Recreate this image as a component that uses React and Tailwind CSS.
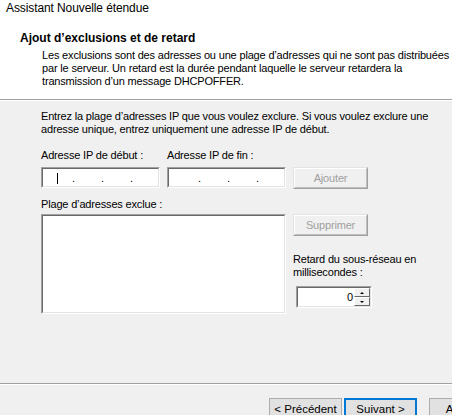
import React from "react";

function Sunken({ className = "", children }) {
  return (
    <div className={"border border-t-[#a0a0a0] border-l-[#a0a0a0] border-r-white border-b-white " + className}>
      <div className="w-full h-full border border-t-[#696969] border-l-[#696969] border-r-[#e3e3e3] border-b-[#e3e3e3] bg-white">
        {children}
      </div>
    </div>
  );
}

function IpBox({ cursor }) {
  return (
    <Sunken className="w-[119px] h-[21px]">
      <div className="relative w-full h-full">
        {cursor && <div className="absolute left-[14px] top-[4px] w-[1px] h-[11px] bg-black" />}
        <span className="absolute left-[29px] top-[3px] leading-[13px]">.</span>
        <span className="absolute left-[58px] top-[3px] leading-[13px]">.</span>
        <span className="absolute left-[87px] top-[3px] leading-[13px]">.</span>
      </div>
    </Sunken>
  );
}

function DisabledButton({ children }) {
  return (
    <div className="w-[75px] h-[22px] border border-t-[#e3e3e3] border-l-[#e3e3e3] border-r-[#a0a0a0] border-b-[#a0a0a0]">
      <div className="w-full h-full border border-t-white border-l-white border-r-[#bfbfbf] border-b-[#bfbfbf] flex items-center justify-center text-[#a0a0a0] bg-[#f0f0f0]">
        {children}
      </div>
    </div>
  );
}

export default function App() {
  return (
    <div className="w-[452px] h-[415px] overflow-hidden bg-[#f0f0f0] flex flex-col font-['Liberation_Sans',Arial,sans-serif] text-[11px] tracking-[-0.17px] whitespace-nowrap text-black">
      <div className="bg-white h-[100px] border-b border-[#a0a0a0] shrink-0">
        <div className="pt-[1px] pl-[6px] text-[12px] leading-[14px] tracking-[-0.1px]">Assistant Nouvelle étendue</div>
        <div className="mt-[17px] pl-[20px] font-bold text-[12px] leading-[13px] tracking-normal">Ajout d’exclusions et de retard</div>
        <div className="mt-[4px] pl-[42px] leading-[13px]">
          <div>Les exclusions sont des adresses ou une plage d’adresses qui ne sont pas distribuées</div>
          <div>par le serveur. Un retard est la durée pendant laquelle le serveur retardera la</div>
          <div>transmission d’un message DHCPOFFER.</div>
        </div>
      </div>
      <div className="h-[1px] bg-white shrink-0" />
      <div className="pl-[41px] pt-[9px] leading-[13px] flex flex-col">
        <div>Entrez la plage d’adresses IP que vous voulez exclure. Si vous voulez exclure une</div>
        <div>adresse unique, entrez uniquement une adresse IP de début.</div>
        <div className="mt-[13px] flex gap-[7px]">
          <div className="w-[119px]">Adresse IP de début :</div>
          <div className="w-[119px]">Adresse IP de fin :</div>
        </div>
        <div className="mt-[5px] flex gap-[7px]">
          <IpBox cursor />
          <IpBox />
          <DisabledButton>Ajouter</DisabledButton>
        </div>
        <div className="mt-[9px]">Plage d’adresses exclue :</div>
        <div className="mt-[3px] flex gap-[7px]">
          <Sunken className="w-[245px] h-[100px]" />
          <div className="flex flex-col">
            <DisabledButton>Supprimer</DisabledButton>
            <div className="mt-[17px] leading-[13px]">
              <div>Retard du sous-réseau en</div>
              <div>millisecondes :</div>
            </div>
            <div className="mt-[7px] ml-[3px]">
              <Sunken className="w-[76px] h-[22px]">
                <div className="flex h-full">
                  <div className="flex-1 text-right pr-[1px] leading-[18px]">0</div>
                  <div className="w-[16px] h-full flex flex-col">
                    <div className="flex-1 bg-[#f0f0f0] border border-t-white border-l-white border-r-[#696969] border-b-[#696969] flex items-center justify-center">
                      <div className="w-0 h-0 border-l-[2px] border-r-[2px] border-b-[2px] border-l-transparent border-r-transparent border-b-black" />
                    </div>
                    <div className="flex-1 bg-[#f0f0f0] border border-t-white border-l-white border-r-[#696969] border-b-[#696969] flex items-center justify-center">
                      <div className="w-0 h-0 border-l-[2px] border-r-[2px] border-t-[2px] border-l-transparent border-r-transparent border-t-black" />
                    </div>
                  </div>
                </div>
              </Sunken>
            </div>
          </div>
        </div>
      </div>
      <div className="mt-auto h-[32px] shrink-0 overflow-hidden">
        <div className="h-[1px] bg-[#a0a0a0]" />
        <div className="h-[1px] bg-white" />
        <div className="mt-[13px] flex pl-[269px] gap-[2px] text-[11.5px] tracking-normal">
          <div className="w-[73px] h-[23px] shrink-0 bg-[#e1e1e1] border border-[#adadad] flex items-center justify-center">&lt; Précédent</div>
          <div className="w-[73px] h-[23px] shrink-0 bg-[#e1e1e1] border-2 border-[#0078d7] flex items-center justify-center">Suivant &gt;</div>
          <div className="ml-[10px] w-[73px] h-[23px] shrink-0 bg-[#e1e1e1] border border-[#adadad] flex items-center justify-center">Annuler</div>
        </div>
      </div>
    </div>
  );
}
